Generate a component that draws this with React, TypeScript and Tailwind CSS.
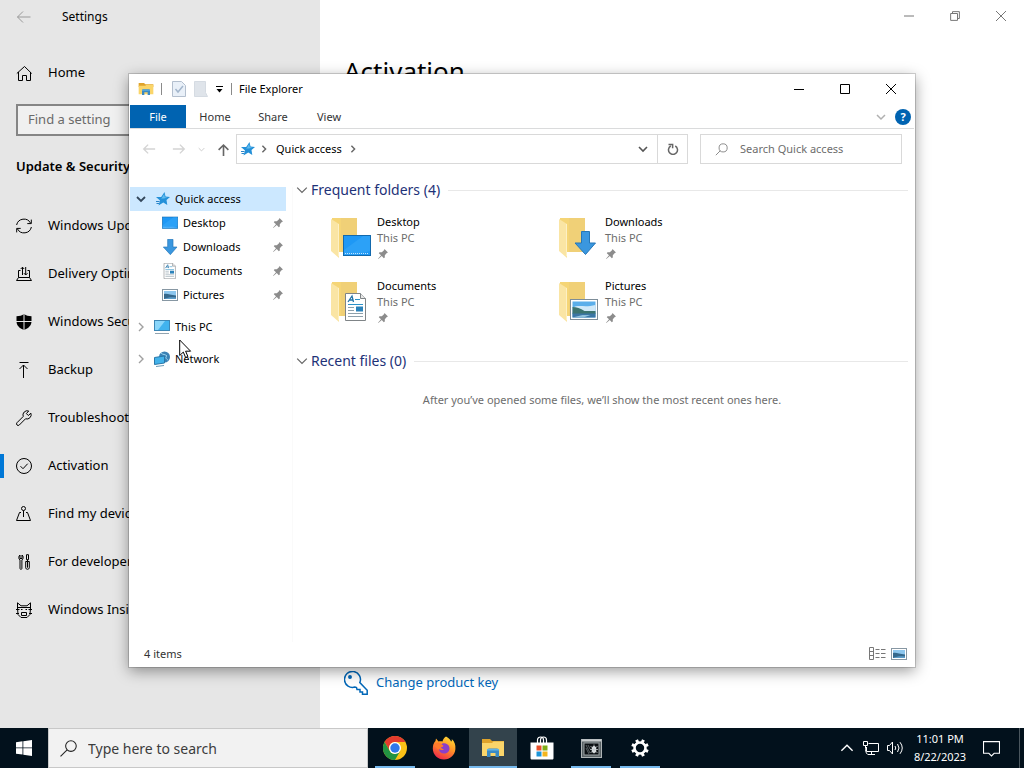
import type { ReactNode } from 'react';

type IconProps = { className?: string };

function Line({ size = 16, width = 1, className = '', children }: { size?: number; width?: number; className?: string; children: ReactNode }) {
  return (
    <svg
      width={size}
      height={size}
      viewBox="0 0 16 16"
      fill="none"
      stroke="currentColor"
      strokeWidth={width}
      className={`shrink-0 ${className}`}
      aria-hidden="true"
    >
      {children}
    </svg>
  );
}

const navItems: { label: string; icon: ReactNode; active?: boolean }[] = [
  {
    label: 'Windows Update',
    icon: (
      <Line>
        <path d="M.6 7A7.5 7.5 0 0 1 14.6 5.2M15.4 9A7.5 7.5 0 0 1 1.4 10.8" />
        <path d="M15.3 1.6v4h-4M.7 14.4v-4h4" />
      </Line>
    ),
  },
  {
    label: 'Delivery Optimization',
    icon: (
      <Line>
        <path d="M4.5 4.5h-2v7M11.5 4.5h2v7M2.5 11.5h11l2 3H.5z" />
        <path d="M6.5 9V1.2M4.7 3l1.8-1.8L8.2 3M9.7 1v8M8 7.2L9.7 9l1.8-1.8" />
      </Line>
    ),
  },
  {
    label: 'Windows Security',
    icon: (
      <svg width="16" height="16" viewBox="0 0 16 16" className="shrink-0" aria-hidden="true">
        <path d="M8 0c2 1.500 4.500 2.200 7.500 2.200v5C15.500 11.500 12.500 14.300 8 16 3.500 14.300.5 11.500.5 7.200v-5C3.500 2.200 6 1.500 8 0z" fill="#000" />
        <path d="M8 0v16M0 7.500h16" stroke="#e6e6e6" />
      </svg>
    ),
  },
  {
    label: 'Backup',
    icon: (
      <Line>
        <path d="M3.500.5h9M7.500 16V3M3.500 7l4-4 4 4" />
      </Line>
    ),
  },
  {
    label: 'Troubleshoot',
    icon: (
      <Line>
        <path d="M14.900 3.200l-2.600 2.300-1.900-1.900L12.700 1a4.300 4.300 0 0 0-5.500 5.500L1 12.700a1.600 1.600 0 0 0 2.300 2.300l6.200-6.200a4.300 4.300 0 0 0 5.400-5.600z" />
      </Line>
    ),
  },
  {
    label: 'Activation',
    active: true,
    icon: (
      <Line>
        <circle cx="8" cy="8" r="7.500" />
        <path d="M4.500 8.200l2.500 2.500 4.700-5" />
      </Line>
    ),
  },
  {
    label: 'Find my device',
    icon: (
      <Line>
        <circle cx="7.500" cy="2.500" r="2" />
        <path d="M7.500 4.500V11M5 6.500H3.500L.5 14.500h14l-3-8H10" />
      </Line>
    ),
  },
  {
    label: 'For developers',
    icon: (
      <Line>
        <path d="M4 1v3.500h2V1c1.500.8 1.700 4-.1 5V14c0 2-1.900 2-1.900 0V6C2.300 5 2.500 1.800 4 1zM10.500.7h2v5h-2zM9.700 7.500h3.600v6.300c0 2-3.600 2-3.600 0zM11.500 5.700v8" />
      </Line>
    ),
  },
  {
    label: 'Windows Insider Program',
    icon: (
      <Line>
        <path d="M1.500 6V.8l3.500 3h6l3.500-3V6l-.5 6.500-3 3H5l-3-3zM0 7.500h3.500M12.500 7.500H16M0 11.500h3M13 11.500h3M2 5.500h12" />
        <path d="M5 7.500h1.500M9.500 7.500H11M5.500 10.500h5v3h-5z" />
      </Line>
    ),
  },
];

function ExplorerIcon({ size = 16 }: { size?: number }) {
  return (
    <svg width={size} height={size} viewBox="0 0 24 24" className="shrink-0" aria-hidden="true">
      <path d="M1 3h8l2 2h12v4H1z" fill="#dfa32b" />
      <path d="M1 7h10l1.500-1.500H23V20H1z" fill="#fad56a" />
      <path d="M6 21v-6.500c0-1.200.8-2 2-2h8c1.200 0 2 .8 2 2V21h-3.500v-4h-5v4z" fill="#3a8ac4" />
      <path d="M6 13h12v1.500H6z" fill="#62b4e6" />
    </svg>
  );
}

function Star({ className = '' }: IconProps) {
  return (
    <svg width="14" height="14" viewBox="0 0 14 14" className={`shrink-0 ${className}`} aria-hidden="true">
      <path d="M8.500 0l1 4.500L14 5l-3.500 3 .8 5L7.300 10.500 2.500 13.500l1.500-5L0 5h5.200z" fill="#2490d8" />
      <path d="M8.200 2l.6 3.300 3 .3-4 .8-3 .2 1-.5z" fill="#62bdf0" />
      <path d="M0 9.500h3.500M.5 11.500H3" stroke="#2a84c8" />
    </svg>
  );
}

function Pin() {
  return (
    <svg width="10" height="10" viewBox="0 0 10 10" className="shrink-0" aria-hidden="true">
      <path d="M6.500 0L10 3.500l-1.200.5-2 2.200v2.300l-1 .7L3.800 7 .3 10 0 9.700l3-3.500L.8 4.200l.7-1h2.300l2.200-2z" fill="#8c8c8c" />
    </svg>
  );
}

function DesktopShape() {
  return (
    <>
      <rect x=".5" y=".5" width="27" height="20" fill="#1e98f5" stroke="#1269ad" />
      <path d="M1 15L20 1h7v15L14 20H1z" fill="#35a6f8" opacity=".6" />
      <path d="M2 18.500h24" stroke="#bfe3ff" strokeDasharray="1 1" />
    </>
  );
}

function ArrowShape() {
  return <path d="M7.500.5h8V12h6L11.500 23.500 1 12h6.500z" fill="#3a97df" stroke="#2577b8" />;
}

function DocumentShape() {
  return (
    <>
      <path d="M.5.5h15l5 5v22H.5z" fill="#fff" stroke="#7f8487" />
      <path d="M15.500.5v5h5" fill="#e8e8e8" stroke="#7f8487" />
      <path d="M3 9l4-6 1.500 6M4.500 7h4" stroke="#2273a8" fill="none" strokeWidth="1.300" />
      <path d="M10 6.500h5M3 11.500h15" stroke="#2b92c9" />
      <path d="M3 14.500h6M3 17.500h6M3 20.500h15M3 23.500h15" stroke="#8ea0ab" />
      <rect x="11" y="13.500" width="7" height="5" fill="#2b82ba" />
    </>
  );
}

function PictureShape() {
  return (
    <>
      <rect x=".5" y=".5" width="27" height="20" fill="#fff" stroke="#7d8d98" />
      <rect x="2.500" y="2.500" width="23" height="16" fill="#5aaeea" />
      <path d="M2.500 9c5-4 12 0 23-3v7h-23z" fill="#cfe8f8" />
      <path d="M2.500 8c4 0 8 1.500 12 4h11v3h-23z" fill="#3c7470" />
      <path d="M2.500 14.500h23v4h-23z" fill="#3b76a5" />
      <path d="M2.500 18.500l10-2.500h8l-7 2.500z" fill="#8fc0dc" />
    </>
  );
}

function SmallPicture({ className = '' }: IconProps) {
  return (
    <svg width="16" height="16" viewBox="0 0 16 16" className={`shrink-0 ${className}`} aria-hidden="true">
      <rect x=".5" y="2.500" width="15" height="11" fill="#fff" stroke="#8797a3" />
      <rect x="2" y="4" width="12" height="8" fill="#8cc6ee" />
      <path d="M2 7c3-1 6 1 12 1.500V12H2z" fill="#35688c" />
      <path d="M2 12c4-2 8-2 12-1.500V12z" fill="#5c9cc9" />
    </svg>
  );
}

function Folder({ children, x, y }: { children: ReactNode; x: number; y: number }) {
  return (
    <svg width="44" height="44" viewBox="0 0 44 44" className="shrink-0" aria-hidden="true">
      <path d="M2 2h25v34H9L2 33z" fill="#f5d576" />
      <path d="M11 2h16v34H11z" fill="#f0d077" />
      <path d="M1 3l8 5v34l-8-7z" fill="#fae5a4" />
      <path d="M8.500 8v32" stroke="#fdf0c4" />
      <g transform={`translate(${x} ${y})`}>{children}</g>
    </svg>
  );
}

function SmallIcon({ viewBox, children }: { viewBox: string; children: ReactNode }) {
  return (
    <svg width="16" height="16" viewBox={viewBox} className="shrink-0" aria-hidden="true">
      {children}
    </svg>
  );
}

const folders = [
  { label: 'Desktop', icon: <DesktopShape />, small: '0 -3 28 28', x: 13, y: 19 },
  { label: 'Downloads', icon: <ArrowShape />, small: '-1 0 24 24', x: 16, y: 15 },
  { label: 'Documents', icon: <DocumentShape />, small: '-3 0 28 28', x: 15, y: 13 },
  { label: 'Pictures', icon: <PictureShape />, small: '', x: 12, y: 19 },
];

function Chevron({ dir, size = 10, width = 1, className = '' }: { dir: 'down' | 'right' | 'up'; size?: number; width?: number; className?: string }) {
  const d = dir === 'down' ? 'M1 3l4 4 4-4' : dir === 'up' ? 'M1 7l4-4 4 4' : 'M3 1l4 4-4 4';
  return (
    <svg width={size} height={size} viewBox="0 0 10 10" fill="none" stroke="currentColor" strokeWidth={width} className={`shrink-0 ${className}`} aria-hidden="true">
      <path d={d} />
    </svg>
  );
}

function Settings() {
  return (
    <div className="flex h-full">
      <aside className="flex w-80 shrink-0 flex-col bg-[#e6e6e6] text-[13px] text-black">
        <div className="flex h-[33px] items-center text-[12px]">
          <button aria-label="Back" className="ml-4 text-[#9a9a9a]">
            <Line>
              <path d="M14.500 8h-13M7 2.500L1.500 8 7 13.500" />
            </Line>
          </button>
          <span className="ml-[30px]">Settings</span>
        </div>
        <a href="#home" className="mt-4 flex h-12 items-center gap-4 pl-4">
          <Line>
            <path d="M.8 8.500L8.500 1.500l7.200 7M2.500 7v8.500h4v-5h4v5h4V7" />
          </Line>
          Home
        </a>
        <input
          type="text"
          aria-label="Find a setting"
          placeholder="Find a setting"
          className="mx-4 mt-[7px] h-8 border-2 border-[#858585] bg-[#f0f0f0] px-[10px] pb-[2px] placeholder:text-[#6a6a6a]"
        />
        <h2 className="mt-[18px] h-6 pl-4 font-semibold leading-6">Update &amp; Security</h2>
        <nav className="mt-6">
          {navItems.map((item) => (
            <a key={item.label} href="#settings" className="relative flex h-12 items-center gap-4 pl-4">
              {item.active && <span className="absolute left-0 h-6 w-1 bg-[#0078d7]" />}
              {item.icon}
              {item.label}
            </a>
          ))}
        </nav>
      </aside>
      <main className="flex min-w-0 flex-1 flex-col bg-white pl-6">
        <div className="flex h-8 justify-end text-[#777]">
          <button aria-label="Minimize" className="flex w-[46px] items-center justify-center">
            <Line size={10} width={1.6}><path d="M0 8h16" /></Line>
          </button>
          <button aria-label="Restore" className="flex w-[46px] items-center justify-center">
            <Line size={10} width={1.6}><path d="M1 4h11v11H1zM4 4V1h11v11h-3" /></Line>
          </button>
          <button aria-label="Close" className="flex w-[46px] items-center justify-center">
            <Line size={10} width={1.6}><path d="M0 0l16 16M16 0L0 16" /></Line>
          </button>
        </div>
        <h1 className="mt-[19px] text-[26px] leading-10 text-black">Activation</h1>
        <a href="#key" className="mb-[33px] mt-auto flex h-6 items-center gap-2 text-[13px] text-[#0067b8]">
          <svg width="24" height="24" viewBox="0 0 24 24" fill="none" stroke="currentColor" strokeWidth="1.500" aria-hidden="true">
            <circle cx="6" cy="6" r="1.200" fill="currentColor" />
            <path d="M15.800 11.600A8 8 0 1 0 11 16l1.500.5.500 2h3v2.500h2.500V23.200h4.700v-4z" />
          </svg>
          Change product key
        </a>
      </main>
    </div>
  );
}

function TitleBar() {
  return (
    <div className="flex h-[30px] shrink-0 items-center text-black">
      <div className="ml-2 flex items-center">
        <ExplorerIcon />
        <span className="ml-[7px] h-3 w-px bg-[#8a8a8a]" />
        <button aria-label="Properties" className="ml-[10px]">
          <svg width="14" height="16" viewBox="0 0 14 16" aria-hidden="true">
            <path d="M.5.5h9l4 4v11H.5z" fill="#e9f0f8" stroke="#b3bfce" />
            <path d="M3.500 8l2.500 3L11 5" fill="none" stroke="#a3b6cc" strokeWidth="1.500" />
          </svg>
        </button>
        <button aria-label="New folder" className="ml-2">
          <svg width="14" height="16" viewBox="0 0 14 16" aria-hidden="true">
            <path d="M.5.5h11v11l2 4H.5z" fill="#dfe4ea" stroke="#d5dbe2" />
          </svg>
        </button>
        <button aria-label="Customize Quick Access Toolbar" className="ml-2">
          <svg width="8" height="8" viewBox="0 0 8 8" aria-hidden="true">
            <path d="M0 1.500h7" stroke="#000" />
            <path d="M.5 4h6l-3 3.500z" fill="#000" />
          </svg>
        </button>
        <span className="ml-[7px] h-3 w-px bg-[#8a8a8a]" />
      </div>
      <span className="ml-[7px]">File Explorer</span>
      <div className="ml-auto flex self-stretch">
        <button aria-label="Minimize" className="flex w-[46px] items-center justify-center">
          <Line size={10} width={1.6}><path d="M0 8.800h16" /></Line>
        </button>
        <button aria-label="Maximize" className="flex w-[46px] items-center justify-center">
          <Line size={10} width={1.6}><path d="M.8.8h14.400v14.400H.8z" /></Line>
        </button>
        <button aria-label="Close" className="flex w-[46px] items-center justify-center">
          <Line size={10} width={1.6}><path d="M0 0l16 16M16 0L0 16" /></Line>
        </button>
      </div>
    </div>
  );
}

function Ribbon() {
  return (
    <div className="flex h-6 shrink-0 items-stretch border-b border-[#dadbdc] text-[#333]">
      <button className="w-14 bg-[#0063b1] text-white">File</button>
      <button className="w-[58px]">Home</button>
      <button className="w-[58px]">Share</button>
      <button className="w-[54px]">View</button>
      <button aria-label="Expand ribbon" className="ml-auto text-[#b0b0b0]">
        <Chevron dir="down" width={1.5} />
      </button>
      <button
        aria-label="Help"
        className="ml-[9px] mr-[3px] flex h-4 w-4 items-center justify-center self-center rounded-full bg-[#0063b1] text-[11px] font-bold text-white"
      >
        ?
      </button>
    </div>
  );
}

function AddressBar() {
  return (
    <div className="mt-[5px] flex h-[30px] shrink-0 items-center pr-3">
      <button aria-label="Back" className="ml-3 text-[#d4d4d4]">
        <Line size={14} width={1.6}><path d="M15 8H2M7 3L2 8l5 5" /></Line>
      </button>
      <button aria-label="Forward" className="ml-4 text-[#d4d4d4]">
        <Line size={14} width={1.6}><path d="M1 8h13M9 3l5 5-5 5" /></Line>
      </button>
      <button aria-label="Recent locations" className="ml-3 text-[#ccc]">
        <Chevron dir="down" size={7} width={1.4} />
      </button>
      <button aria-label="Up" className="ml-3 text-[#666]">
        <Line size={13} width={2}><path d="M8 16V2.500M2 8.500l6-6 6 6" /></Line>
      </button>
      <div className="ml-[6px] flex h-full min-w-0 flex-1 items-center border border-[#d9d9d9] text-black">
        <Star className="ml-1" />
        <Chevron dir="right" size={8} width={1.8} className="ml-[5px] text-[#666]" />
        <button className="ml-2 whitespace-nowrap">Quick access</button>
        <Chevron dir="right" size={8} width={1.8} className="ml-[7px] text-[#666]" />
        <button aria-label="Previous locations" className="ml-auto mr-[9px] text-[#555]">
          <Chevron dir="down" width={1.6} />
        </button>
        <button aria-label="Refresh" className="flex w-[30px] items-center justify-center self-stretch border-l border-[#d9d9d9] text-[#666]">
          <Line size={12} width={2}>
            <path d="M11 4a6 6 0 1 1-6 0M2 2h5.500v5" />
          </Line>
        </button>
      </div>
      <label className="ml-3 flex h-full w-[202px] items-center border border-[#d9d9d9] text-[#8a8a8a]">
        <Line size={13} width={1.2} className="ml-[14px]">
          <circle cx="10" cy="6" r="5" />
          <path d="M6.500 9.500L1 15" />
        </Line>
        <input
          type="text"
          aria-label="Search Quick access"
          placeholder="Search Quick access"
          className="ml-3 min-w-0 flex-1 bg-transparent placeholder:text-[#6d6d6d]"
        />
      </label>
    </div>
  );
}

function NavPane() {
  return (
    <nav className="w-[163px] shrink-0 border-r border-[#fafafa] text-black">
      <a href="#quick" className="mr-[6px] flex h-6 items-center bg-[#cce8ff] pl-[6px]">
        <Chevron dir="down" width={1.8} className="text-[#33475b]" />
        <Star className="ml-[10px]" />
        <span className="ml-[5px]">Quick access</span>
      </a>
      {folders.map((f) => (
        <a key={f.label} href="#folder" className="flex h-6 items-center pl-8 pr-[9px]">
          {f.small ? <SmallIcon viewBox={f.small}>{f.icon}</SmallIcon> : <SmallPicture />}
          <span className="ml-[5px] flex-1">{f.label}</span>
          <Pin />
        </a>
      ))}
      <a href="#pc" className="mt-2 flex h-6 items-center pl-[6px] text-black">
        <Chevron dir="right" width={1.4} className="text-[#a0a0a0]" />
        <svg width="16" height="16" viewBox="0 0 16 16" className="ml-2" aria-hidden="true">
          <rect x=".5" y="1.500" width="15" height="10" fill="#41b3ee" stroke="#3d87b5" />
          <path d="M1 2h10l-7 9H1z" fill="#8ad6fa" />
          <path d="M1 14.500h14" stroke="#92a4b0" />
        </svg>
        <span className="ml-[5px]">This PC</span>
      </a>
      <a href="#network" className="mt-2 flex h-6 items-center pl-[6px]">
        <Chevron dir="right" width={1.4} className="text-[#a0a0a0]" />
        <svg width="16" height="16" viewBox="0 0 16 16" className="ml-2" aria-hidden="true">
          <circle cx="10.500" cy="6" r="5.500" fill="#3b82b5" />
          <path d="M7 2c2 2 4 1 6 3-2 1-1 3 1 4" stroke="#9bd6f2" fill="none" />
          <path d="M.5 6.500l10-1.500v7l-10 1.500z" fill="#42b2ea" stroke="#2977a8" />
          <path d="M2 15.500l8-1" stroke="#6c9ab5" />
        </svg>
        <span className="ml-[5px]">Network</span>
      </a>
    </nav>
  );
}

function GroupHeader({ title }: { title: string }) {
  return (
    <div className="flex h-6 items-center">
      <Chevron dir="down" size={12} className="text-[#666]" />
      <h2 className="ml-[3px] text-[14px] leading-6 text-[#1e3278]">{title}</h2>
      <span className="ml-2 h-px flex-1 bg-[#e8e8e8]" />
    </div>
  );
}

function Explorer() {
  return (
    <section
      aria-label="File Explorer"
      className="absolute bottom-[61px] left-[129px] right-[109px] top-[74px] flex flex-col border border-t-0 border-white bg-white text-[11px] leading-4 shadow-[0_0_0_1px_rgba(0,0,0,0.16),0_4px_14px_rgba(0,0,0,0.4)]"
    >
      <TitleBar />
      <div className="h-px shrink-0" />
      <Ribbon />
      <AddressBar />
      <div className="mt-[23px] flex min-h-0 flex-1">
        <NavPane />
        <div className="min-w-0 flex-1 pl-[3px] pr-[6px]">
          <div className="-mt-[9px]">
            <GroupHeader title="Frequent folders (4)" />
            <div className="mt-3 grid grid-cols-[228px_228px] pl-[34px]">
              {folders.map((f) => (
                <button key={f.label} className="flex h-16 gap-[3px] text-left">
                  <span className="pt-[2px]">
                    <Folder x={f.x} y={f.y}>{f.icon}</Folder>
                  </span>
                  <span>
                    <span className="block text-black">{f.label}</span>
                    <span className="block text-[#6d6d6d]">This PC</span>
                    <span className="flex h-4 items-center pl-[1px]">
                      <Pin />
                    </span>
                  </span>
                </button>
              ))}
            </div>
          </div>
          <div className="mt-[7px]">
            <GroupHeader title="Recent files (0)" />
            <p className="mt-[19px] text-center text-[#6d6d6d]">After you’ve opened some files, we’ll show the most recent ones here.</p>
          </div>
        </div>
      </div>
      <footer className="flex h-6 shrink-0 items-center pl-[14px] pr-[7px] text-[#333]">
        <span>4 items</span>
        <button aria-label="Details view" className="ml-auto">
          <svg width="17" height="14" viewBox="0 0 17 14" fill="none" stroke="#777" aria-hidden="true">
            <path d="M.5.5h4v12h-4zM.5 4.500h4M.5 8.500h4M6.500 2.500h4M12 2.500h4.500M6.500 6.500h4M12 6.500h4.500M6.500 10.500h4M12 10.500h4.500" />
          </svg>
        </button>
        <button aria-label="Large icons view" className="ml-[5px]">
          <SmallPicture />
        </button>
      </footer>
    </section>
  );
}

const apps: { name: string; state: 'open' | 'active' | 'idle'; icon: ReactNode }[] = [
  {
    name: 'Google Chrome',
    state: 'open',
    icon: (
      <svg width="24" height="24" viewBox="0 0 24 24" aria-hidden="true">
        <circle cx="12" cy="12" r="12" fill="#fbc116" />
        <path d="M1.600 6A12 12 0 0 1 22.400 6H12a6 6 0 0 0-5.200 9z" fill="#e33b2e" />
        <path d="M1.600 6l5.200 9A6 6 0 0 0 12 18l5.200-3L12 24A12 12 0 0 1 1.600 6z" fill="#229342" />
        <circle cx="12" cy="12" r="6" fill="#fff" />
        <circle cx="12" cy="12" r="4.700" fill="#2f78ea" />
      </svg>
    ),
  },
  {
    name: 'Firefox',
    state: 'idle',
    icon: (
      <svg width="24" height="24" viewBox="0 0 24 24" aria-hidden="true">
        <defs>
          <linearGradient id="fire" x1=".8" y1="0" x2=".3" y2="1">
            <stop offset="0" stopColor="#ffdf36" />
            <stop offset=".45" stopColor="#ff9526" />
            <stop offset="1" stopColor="#f0264b" />
          </linearGradient>
        </defs>
        <path d="M14 .5c3 1.500 4.500 3.500 5 5 1-.2 1-1.500.7-2.500 3 2.500 4 6 3.700 10C23 19 18 23.500 12 23.500S.8 19 .8 12.500C.8 9 2 6.500 3.500 5L4 2.500l2.500 3c1.500-.5 2.500-.4 4 0C11 3.500 12 1.500 14 .5z" fill="url(#fire)" />
        <path d="M9 8.500c2-2 7-1.500 8.300 2.500 1 4-1.800 6.500-5 6.500-3.500 0-5.300-2-5.300-4.500 1.500 1.500 3.500 1.300 5 .2-1.500 0-3-1-3-2.200 1-.2 2-.7 2.200-1.300C10.500 9.500 10 9 9 8.500z" fill="#8b3fc9" />
        <path d="M1.500 9c2-3 6-3.500 8-.5 1 .8 2 .9 1.800 1.400-.3.800-1.500 1-2.600 1.100-.5 1.500-2 2.500-3.200 2z" fill="#ff7a2c" />
      </svg>
    ),
  },
  { name: 'File Explorer', state: 'active', icon: <ExplorerIcon size={24} /> },
  {
    name: 'Microsoft Store',
    state: 'idle',
    icon: (
      <svg width="24" height="24" viewBox="0 0 24 24" aria-hidden="true">
        <path d="M7.500 7V4c0-4 6-4 6 0v3M10.500 7V4c0-4 6-4 6 0v3" fill="none" stroke="#fff" strokeWidth="1.200" />
        <path d="M.5 6.500h23V22c0 1-.5 1.500-1.500 1.500H2c-1 0-1.500-.5-1.500-1.500z" fill="#fff" />
        <path d="M6.500 9.500h5v5h-5z" fill="#e8502b" />
        <path d="M12.500 9.500h5v5h-5z" fill="#80ad19" />
        <path d="M6.500 15.500h5v5h-5z" fill="#1d95d8" />
        <path d="M12.500 15.500h5v5h-5z" fill="#f4b51d" />
      </svg>
    ),
  },
  {
    name: 'Debugger',
    state: 'open',
    icon: (
      <svg width="21" height="19" viewBox="0 0 21 19" aria-hidden="true">
        <rect x=".5" y=".5" width="20" height="18" fill="#596265" stroke="#aeb4b6" />
        <path d="M1 1.500h19" stroke="#c9cdce" strokeWidth="2" />
        <rect x="3" y="4" width="15" height="12" fill="#0a0f12" stroke="#9aa1a4" />
        <ellipse cx="13" cy="10.500" rx="2.300" ry="3.500" fill="#e6eaeb" />
        <path d="M9.500 7l7 7M16.500 7l-7 7M9 10.500h8M13 5.500v9" stroke="#c3c9cb" strokeWidth=".8" />
        <path d="M5 6l4 8M5 9l3 6M7 6l2 4" stroke="#6d7679" strokeWidth=".8" />
      </svg>
    ),
  },
  {
    name: 'Settings',
    state: 'open',
    icon: (
      <svg width="20" height="20" viewBox="0 0 20 20" fill="none" stroke="#fff" aria-hidden="true">
        <circle cx="10" cy="10" r="5.500" strokeWidth="2.600" />
        <path d="M15.500 12.300l2.600 1.100M12.300 15.500l1.100 2.600M7.700 15.500l-1.100 2.600M4.500 12.300l-2.600 1.100M4.500 7.700L1.900 6.600M7.700 4.500L6.600 1.900M12.300 4.500l1.100-2.600M15.500 7.700l2.600-1.100" strokeWidth="3" />
      </svg>
    ),
  },
];

function Taskbar() {
  return (
    <footer className="flex h-10 shrink-0 items-stretch bg-[#02111c] text-white">
      <button aria-label="Start" className="flex w-12 shrink-0 items-center justify-center">
        <svg width="16" height="16" viewBox="0 0 16 16" fill="#fff" aria-hidden="true">
          <path d="M0 2.200l6.500-.9v6.200H0zM7.300 1.200L16 0v7.500H7.300zM0 8.300h6.500v6.300L0 13.700zM7.300 8.300H16V16l-8.700-1.300z" />
        </svg>
      </button>
      <label className="flex w-80 shrink-0 items-center border border-[#c8c8c8] bg-[#f2f2f2] pl-[11px] text-[#222]">
        <Line size={17}>
          <circle cx="10.300" cy="5.700" r="5" />
          <path d="M6.700 9.300L.5 15.500" />
        </Line>
        <input
          type="text"
          aria-label="Type here to search"
          placeholder="Type here to search"
          className="ml-[11px] min-w-0 flex-1 bg-transparent text-[14px] placeholder:text-[#3c3c3c]"
        />
      </label>
      <div className="ml-[3px] flex gap-px">
        {apps.map((app) => (
          <button
            key={app.name}
            aria-label={app.name}
            className={`relative flex w-12 items-center justify-center ${app.state === 'active' ? 'bg-[#33434c]' : ''}`}
          >
            {app.icon}
            {app.state !== 'idle' && (
              <span className={`absolute bottom-0 h-[2px] bg-[#76b9ed] ${app.state === 'active' ? 'inset-x-0' : 'inset-x-1'}`} />
            )}
          </button>
        ))}
      </div>
      <div className="ml-auto flex items-center">
        <button aria-label="Show hidden icons">
          <Chevron dir="up" size={14} />
        </button>
        <button aria-label="Network" className="ml-[9px]">
          <Line>
            <path d="M5.500 3.500h10v8h-12V7M8.500 11.500v3M5 14.500h7M.5 1.500h4v4h-4zM2.500 5.500v3c0 1 0 4 2 6" />
          </Line>
        </button>
        <button aria-label="Volume" className="ml-2">
          <svg width="17" height="16" viewBox="0 0 17 16" fill="none" stroke="currentColor" aria-hidden="true">
            <path d="M.5 5.500h2l3-3.500v12l-3-3.500h-2z" />
            <path d="M8 6q1.500 2 0 4M10.500 4q3 4 0 8M13 2.200q4.500 5.800 0 11.600" />
          </svg>
        </button>
        <div className="ml-[9px] w-[54px] text-center text-[11px] leading-[18px]">
          <p className="whitespace-nowrap">11:01 PM</p>
          <p className="whitespace-nowrap">8/22/2023</p>
        </div>
        <button aria-label="Notifications" className="ml-4">
          <Line size={17}>
            <path d="M.5 1.500h15v11H10.500L8 15l-2.500-2.500h-5z" />
          </Line>
        </button>
        <span className="ml-[19px] mr-1 h-10 w-px bg-[#4a565e]" />
      </div>
    </footer>
  );
}

export default function App() {
  return (
    <div className="relative flex h-screen flex-col overflow-hidden font-['Noto_Sans','Open_Sans',sans-serif]">
      <div className="relative min-h-0 flex-1">
        <Settings />
        <Explorer />
      </div>
      <Taskbar />
      <svg width="13" height="20" viewBox="0 0 13 20" className="absolute left-[179px] top-[339px]" aria-hidden="true">
        <path d="M.7 1v15.500l3.600-3.400 2.300 5.400 2.300-1-2.300-5.300h5z" fill="#fff" stroke="#000" />
      </svg>
    </div>
  );
}
